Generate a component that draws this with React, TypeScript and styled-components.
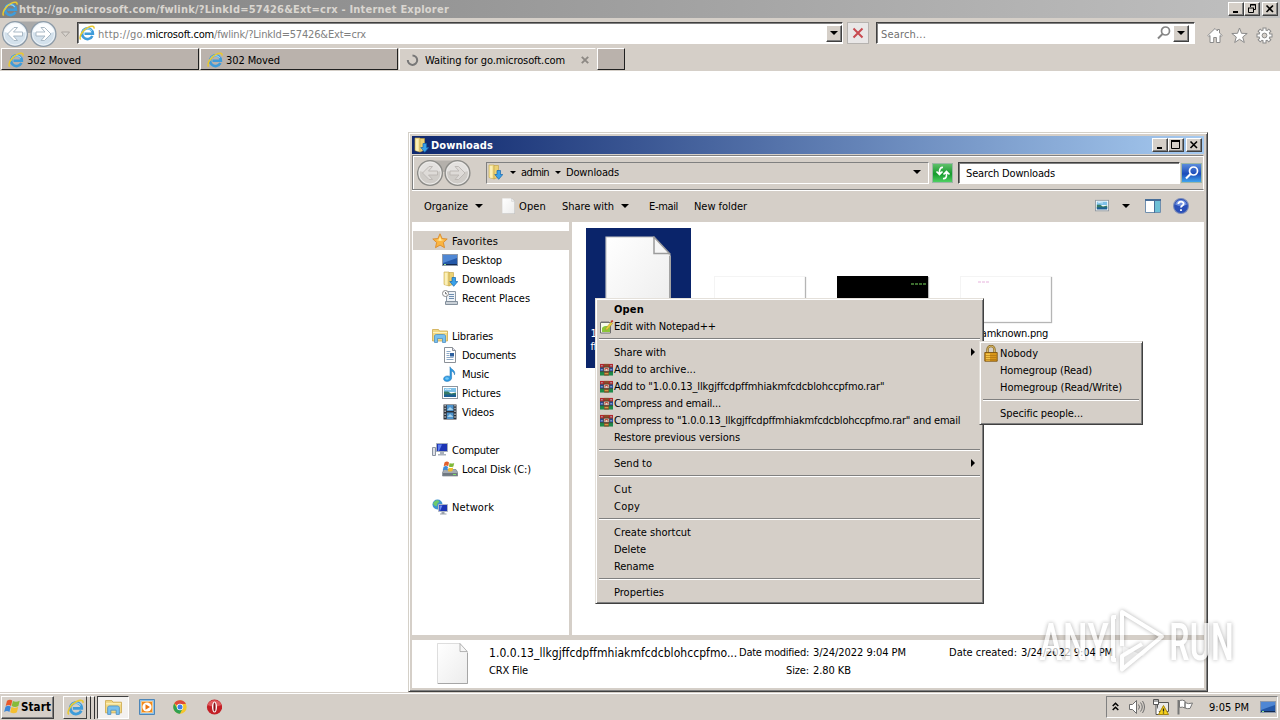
import { useLayoutEffect, useRef, useState } from 'react'
import type { ReactNode } from 'react'
import styled, { createGlobalStyle, css } from 'styled-components'

const face = '#d5cfc8'

const GlobalStyle = createGlobalStyle`
  * {
    box-sizing: border-box;
  }
  body {
    margin: 0;
    overflow: hidden;
    background: #fff;
    color: #000;
    font-family: 'DejaVu Sans Condensed', 'DejaVu Sans', sans-serif;
    font-stretch: condensed;
    font-size: 11px;
    line-height: 17px;
  }
  svg {
    display: block;
    flex: none;
  }
`

const raised = css`
  border: 1px solid;
  border-color: #fff #404040 #404040 #fff;
  box-shadow: inset -1px -1px 0 #808080;
`

/* ---------- text ---------- */

const TextSpan = styled.span<{ $ml?: number; $mt?: number; $color?: string; $bold?: boolean; $size?: number }>`
  flex: none;
  white-space: pre;
  margin-left: ${(p) => p.$ml || 0}px;
  margin-top: ${(p) => p.$mt || 0}px;
  color: ${(p) => p.$color || 'inherit'};
  font-weight: ${(p) => (p.$bold ? 'bold' : 'normal')};
  font-size: ${(p) => p.$size || 11}px;
`

type TextProps = {
  w: number
  ml?: number
  mt?: number
  color?: string
  bold?: boolean
  size?: number
  children: ReactNode
}

// tracks the label so that it takes exactly w pixels
const Text = ({ w, ml, mt, color, bold, size, children }: TextProps) => {
  const ref = useRef<HTMLSpanElement>(null)
  const [spacing, setSpacing] = useState(0)

  useLayoutEffect(() => {
    const el = ref.current
    if (!el || !el.textContent) return
    el.style.letterSpacing = '0px'
    const natural = el.getBoundingClientRect().width
    setSpacing((w - natural) / el.textContent.length)
  }, [w])

  return (
    <TextSpan
      ref={ref}
      $ml={ml}
      $mt={mt}
      $color={color}
      $bold={bold}
      $size={size}
      style={{ letterSpacing: `${spacing}px` }}
    >
      {children}
    </TextSpan>
  )
}

/* ---------- icons ---------- */

const IeIcon = ({ size = 16 }: { size?: number }) => (
  <svg width={size} height={size} viewBox="0 0 16 16" fill="none">
    <path d="M13.400 11A5.400 5.400 0 1 1 13.900 8.800H5.500" stroke="#3f9cda" strokeWidth="2.600" />
    <path d="M3.300 8.500A5.200 5.200 0 0 1 12.800 6" stroke="#9bd8f7" strokeWidth="1.100" />
    <path d="M1.600 14.600C-.4 12 3.400 5 9 2.400C12.500.8 15.600.8 15 3.600" stroke="#e9c930" strokeWidth="1.500" />
  </svg>
)

const ArrowDown = styled.i<{ $ml?: number; $size?: number }>`
  flex: none;
  width: 0;
  height: 0;
  margin-left: ${(p) => p.$ml || 0}px;
  border: ${(p) => p.$size || 4}px solid transparent;
  border-top-color: #000;
  border-bottom: 0;
`

const DownloadsIcon = () => (
  <svg width="16" height="16" viewBox="0 0 16 16">
    <path d="M2 1h5v14l-5-1.500z" fill="#f6e59a" stroke="#c9a94a" strokeWidth=".6" />
    <path d="M7 1.500h4.500V13L7 15z" fill="#ecd274" stroke="#bf9e41" strokeWidth=".6" />
    <path d="M4 2v12" stroke="#fff9d8" />
    <path d="M10 6.500h3.500v4h2.300L11.700 15.300 7.800 10.500H10z" fill="#3aa2ea" stroke="#1565ac" strokeWidth=".7" />
  </svg>
)

const StarIcon = () => (
  <svg width="16" height="16" viewBox="0 0 16 16">
    <path
      d="M8 .8l2.100 4.700 5.100.5-3.800 3.500 1.100 5.200L8 12.100l-4.500 2.600 1.100-5.200L.8 6l5.100-.5z"
      fill="#fbb540"
      stroke="#d98a2b"
      strokeWidth=".9"
    />
    <path d="M8 3l1.200 3.400L12 7l-4 1-3.500-1 2.300-.6z" fill="#fee79a" />
  </svg>
)

const DesktopIcon = () => (
  <svg width="16" height="16" viewBox="0 0 16 16">
    <rect x=".5" y="2.500" width="15" height="11" fill="#2458a8" stroke="#8d99ab" />
    <path d="M1 3h14v3L1 11z" fill="#4f87d4" />
    <path d="M1 12.500h14" stroke="#13294f" />
    <path d="M2 12.500h2" stroke="#8fe08a" />
  </svg>
)

const RecentIcon = () => (
  <svg width="16" height="16" viewBox="0 0 16 16">
    <path d="M4.500 1.500h9v11h-9z" fill="#eef2f6" stroke="#8e9aa6" />
    <path d="M7 4.500h5M7 6.500h5M7 8.500h5" stroke="#6c8db1" />
    <path d="M3.500 11.500h12v3h-12z" fill="#c9d0d7" stroke="#84909c" />
    <circle cx="3.500" cy="3.500" r="3" fill="#fff" stroke="#8a8a8a" />
    <path d="M3.500 2v1.800H5" stroke="#555" fill="none" strokeWidth=".8" />
  </svg>
)

const FolderIcon = ({ size = 16 }: { size?: number }) => (
  <svg width={size} height={size} viewBox="0 0 16 16">
    <path d="M.5 1.500h6l1 1.500h8v10H.5z" fill="#f2d984" stroke="#cda94e" strokeWidth=".8" />
    <path d="M1 4.500h14" stroke="#fff4c0" />
    <path d="M2.500 8c0-1 1-1.500 2-1.500h7c1 0 2 .5 2 1.500V14.500h-3v-4H5.500v4h-3z" fill="#78c0ee" stroke="#4487bd" strokeWidth=".7" />
  </svg>
)

const DocumentIcon = () => (
  <svg width="16" height="16" viewBox="0 0 16 16">
    <path d="M2.500.5h8l3 3v12h-11z" fill="#fff" stroke="#8b9097" />
    <path d="M10.500.5v3h3" fill="#dde" stroke="#8b9097" />
    <path d="M4.500 4.500h4M4.500 6.500h3M4.500 8.500h3M4.500 10.500h7M4.500 12.500h7" stroke="#8daac9" />
    <path d="M8 6h4v3.500H8z" fill="#2d5f9e" />
  </svg>
)

const MusicIcon = () => (
  <svg width="16" height="16" viewBox="0 0 16 16">
    <path d="M8 .8c.5 2.700 6 3 4.500 8-.3-2.200-1.600-3.400-2.900-3.800v7c0 4-8 4.700-8 1 0-3 4-3.700 6.400-2.500z" fill="#2d9be3" stroke="#1b6cae" strokeWidth=".5" />
    <ellipse cx="5" cy="12.500" rx="1.800" ry="1.200" fill="#74c8f6" />
  </svg>
)

const PictureIcon = ({ w = 16 }: { w?: number }) => (
  <svg width={w} height={w} viewBox="0 0 16 16">
    <rect x=".5" y="1.500" width="15" height="12" fill="#fff" stroke="#8d969f" />
    <path d="M2 3h12v4H2z" fill="#7cc0e8" />
    <path d="M2 6.500h4l3 2 5-1v3H2z" fill="#357a66" />
    <path d="M2 9.500h12V12H2z" fill="#1c5f93" />
    <path d="M3 4.500c2-1 4 0 6 0" stroke="#e3f4fb" fill="none" />
  </svg>
)

const VideoIcon = () => (
  <svg width="16" height="16" viewBox="0 0 16 16">
    <path d="M1.500.5h13v15h-13z" fill="#2b2f36" />
    <path d="M4.700 1h6.800v6H4.700zM4.700 8.500h6.800v6.500H4.700z" fill="#4f93cb" />
    <path d="M5 6l3-3 3.500 3zM5 13l3-3 3.500 3z" fill="#a7d2ea" />
    <path d="M3.100 1v14M13 1v14" stroke="#d7dde2" strokeWidth="1.200" strokeDasharray="1.500 1.300" />
  </svg>
)

const ComputerIcon = () => (
  <svg width="16" height="16" viewBox="0 0 16 16">
    <path d="M.5 5.500h3v8h-3z" fill="#dde0e6" stroke="#8b93a1" />
    <path d="M4.500 1.500h11v8h-11z" fill="#1c34b4" stroke="#a5adba" />
    <path d="M6 2.500h4L7 9H6z" fill="#5d7df0" />
    <path d="M8 10h4v2h2v1.500H6V12h2z" fill="#aab1bb" />
  </svg>
)

const DiskIcon = () => (
  <svg width="16" height="16" viewBox="0 0 16 16">
    <path d="M2 8.500h12l1.800 3v3.500H.5v-3.500z" fill="#a4abb2" stroke="#6c737b" strokeWidth=".6" />
    <path d="M1 12h14.500v2.800H1z" fill="#6f7881" />
    <path d="M11 13.500h3" stroke="#7ee06a" />
    <path d="M2.500 1.500q2.500-2 4.500 0l-.8 3.700q-2-1.500-4.500 0z" fill="#e2602c" />
    <path d="M7.700 2q2 1.200 4.500 0l-.8 3.500q-2.500 1.200-4.500 0z" fill="#7fb93a" />
    <path d="M1.500 6q2.500-1.800 4.500 0L5.200 9.500q-2-1.500-4.500 0z" fill="#3e8ad8" />
    <path d="M6.700 6.500q2 1.200 4.500 0l-.8 3.500q-2.500 1.200-4.500 0z" fill="#f2bd2c" />
  </svg>
)

const NetworkIcon = () => (
  <svg width="16" height="16" viewBox="0 0 16 16">
    <circle cx="5.500" cy="5.500" r="5" fill="#3f94cf" />
    <path d="M2 3c2-2 4-2 5-1s-2 2-2 4-2 1-3 0-1-2 0-3z" fill="#6ecb6b" />
    <path d="M6.500 5.500h9v7h-9z" fill="#1c34b4" stroke="#b2b9c4" />
    <path d="M7.500 6.500h3L8 12h-.5z" fill="#6b8af2" />
    <path d="M9.500 13h3v1.500h2v1H8v-1h1.500z" fill="#9aa1ac" />
  </svg>
)

const FileIcon = ({ w, h }: { w: number; h: number }) => (
  <svg width={w} height={h} viewBox="0 0 66 84" preserveAspectRatio="none">
    <defs>
      <linearGradient id="paper" x1="0" y1="0" x2="1" y2="1">
        <stop offset="0" stopColor="#fff" />
        <stop offset="1" stopColor="#ececec" />
      </linearGradient>
    </defs>
    <path d="M1 1h47l17 18v64H1z" fill="url(#paper)" stroke="#c6c6c6" strokeWidth="1.200" />
    <path d="M65 20v63H2" fill="none" stroke="#a3a3a3" strokeWidth="2" />
    <path d="M49 1v16.500H64.500z" fill="#f6f6f6" stroke="#9c9c9c" strokeWidth="1.500" />
  </svg>
)

const RarIcon = () => (
  <svg width="13" height="13" viewBox="0 0 14 14">
    <path d="M0 1h14v4H0z" fill="#b3262c" />
    <path d="M0 5h14v4H0z" fill="#2c50a8" />
    <path d="M0 9h14v4.500H0z" fill="#1e8a4a" />
    <path d="M0 5.200h14M0 9.300h14" stroke="#222" strokeWidth=".7" />
    <path d="M1 3h2M11 3h2M1 7.300h2M11 7.300h2" stroke="#a9c0c9" />
    <path d="M4.500 1h5v12.500h-5z" fill="#8a4b2a" />
    <path d="M4 4.500h6v4.500H4z" fill="#e8e2d6" stroke="#3b2a1e" strokeWidth=".7" />
    <path d="M5.500 8V6h3v2" fill="none" stroke="#c23d2a" />
    <path d="M5 11.500h4" stroke="#e9b94a" />
  </svg>
)

const NotepadIcon = () => (
  <svg width="14" height="14" viewBox="0 0 14 14">
    <path d="M.5 2.500h10v10.500H.5z" fill="#f7fbe9" stroke="#6c6c6c" />
    <path d="M2 8c2-3 7-2 8-.5V12H2z" fill="#8cc63a" />
    <path d="M2 1v2M4 1v2M6 1v2M8 1v2" stroke="#777" />
    <path d="M6 8l5-6 1.600 1.400-5 6-2.100.8z" fill="#e8d03c" stroke="#a08a30" strokeWidth=".5" />
    <path d="M11 1.900L12.900.8" stroke="#c3392b" strokeWidth="1.800" />
  </svg>
)

const LockIcon = () => (
  <svg width="14" height="17" viewBox="0 0 14 17">
    <path d="M3.500 8V4.500a3.500 3.500 0 0 1 7 0V8" fill="none" stroke="#8c6a22" strokeWidth="2.400" />
    <path d="M3.500 8V4.500a3.500 3.500 0 0 1 7 0V8" fill="none" stroke="#dcc070" strokeWidth=".9" />
    <path d="M.8 7.500h12.400v8.700H.8z" fill="#d8961a" stroke="#7d5310" strokeWidth=".9" />
    <path d="M2 8.500h4v7H2z" fill="#f4c549" />
    <path d="M1.500 10.500h11M1.500 12.500h11M1.500 14.500h11" stroke="#a86d10" strokeWidth=".6" />
  </svg>
)

const WindowsFlag = () => (
  <svg width="17" height="16" viewBox="0 0 17 16">
    <path d="M3 1.800q3-2.200 5.300-.2L7 6.900q-2.300-1.700-5.300 0z" fill="#e8582a" />
    <path d="M8.900 2q3 1.600 6.800-.2l-1.300 5.300q-3.300 1.700-6.700 0z" fill="#86bb3b" />
    <path d="M1.500 7.700q3-1.800 5.300 0L5.400 13q-2.300-1.800-5.300 0z" fill="#3b86d8" />
    <path d="M7.500 8.100q3 1.600 6.700 0l-1.300 5.200q-3.200 1.700-6.700 0z" fill="#f5bf30" />
  </svg>
)

type NavArrowsProps = { grey?: boolean }

const NavArrows = ({ grey }: NavArrowsProps) => {
  const second = grey ? 40.5 : 41.5
  const ring = grey ? '#8b8b88' : '#8d9aa6'
  const fill = grey ? '#cfccc8' : '#d3e1ec'
  const arrow = grey ? '#dedbd8' : '#fff'
  const line = grey ? '#bab6b2' : '#a2b2c0'
  return (
    <svg width="56" height="28" viewBox="0 0 56 28">
      <path d="M13 1.500h28v9q-14 5-28 0z" fill={grey ? '#b4b0ab' : '#a9a9a9'} />
      {[13, second].map((cx, i) => (
        <g key={cx} transform={`translate(${cx} 14)`}>
          <circle r="12.400" fill={fill} stroke={ring} strokeWidth="1.300" />
          <path d="M-10.500-2a10.700 10.700 0 0 1 21 0q-10 4-21 0z" fill={grey ? '#e3e1df' : '#fbfdff'} />
          <circle r="11" fill="none" stroke="#fff" strokeOpacity=".6" />
          <path
            transform={i ? 'scale(-1 1)' : undefined}
            d="M-7.500 0L-1-6.500H2.500L-1.500-2H7.500V2h-9l4 4.500H-1z"
            fill={arrow}
            stroke={line}
            strokeWidth=".9"
          />
        </g>
      ))}
    </svg>
  )
}

const gearAngles = [0, 45, 90, 135]

const GearIcon = () => (
  <svg width="17" height="17" viewBox="-8.500 -8.500 17 17">
    {gearAngles.map((a) => (
      <path key={a} transform={`rotate(${a})`} d="M-8 0H8" stroke="#8a8a8a" strokeWidth="4" />
    ))}
    <circle r="6" fill="#8a8a8a" />
    {gearAngles.map((a) => (
      <path key={a} transform={`rotate(${a})`} d="M-7 0H7" stroke="#fff" strokeWidth="2" />
    ))}
    <circle r="5" fill="#fff" />
    <circle r="2.400" fill={face} stroke="#8a8a8a" />
  </svg>
)

/* ---------- small controls ---------- */

const CaptionButton = styled.button`
  ${raised}
  display: flex;
  align-items: center;
  justify-content: center;
  width: 16px;
  height: 14px;
  padding: 0;
  background: ${face};
  color: #000;

  &:last-child {
    margin-left: 2px;
  }
`

type CaptionProps = { restored?: boolean }

const CaptionButtons = ({ restored }: CaptionProps) => (
  <>
    <CaptionButton>
      <svg width="10" height="10">
        <path d="M2 8h5" stroke="#000" strokeWidth="2" />
      </svg>
    </CaptionButton>
    <CaptionButton>
      <svg width="10" height="10" fill="none" stroke="#000">
        {restored ? (
          <path d="M3.500 3V.5h5v5H7M3 1h6M1.500 4v4.500h5V4M1 4h6" />
        ) : (
          <path d="M.5 1v7.500h8V1M0 1.500h9M0 .5h9" />
        )}
      </svg>
    </CaptionButton>
    <CaptionButton>
      <svg width="10" height="10">
        <path d="M1.500 1.500l6.500 6.500M8 1.500L1.500 8" stroke="#000" strokeWidth="1.600" />
      </svg>
    </CaptionButton>
  </>
)

const DropButton = styled.button`
  ${raised}
  display: flex;
  align-items: center;
  justify-content: center;
  width: 16px;
  height: 17px;
  padding: 0;
  background: ${face};
`

/* ---------- browser ---------- */

const Screen = styled.div`
  position: relative;
  display: flex;
  flex-direction: column;
  width: 1280px;
  height: 720px;
  background: #fff;
`

const BrowserTitle = styled.header`
  display: flex;
  align-items: center;
  height: 18px;
  padding: 0 2px;
  background: linear-gradient(90deg, #808080, #c0c0c0);
`

const Spacer = styled.div`
  flex: 1;
`

const BrowserBar = styled.div`
  display: flex;
  height: 30px;
  padding: 2px 7px 0 2px;
  background: ${face};
`

const Field = styled.div<{ $w: number; $ml: number; $mt?: number }>`
  display: flex;
  align-items: center;
  width: ${(p) => p.$w}px;
  height: 22px;
  margin: ${(p) => p.$mt ?? 2}px 0 0 ${(p) => p.$ml}px;
  border: 1px solid;
  border-color: #404040 #fff #fff #404040;
  box-shadow: inset 1px 1px 0 #808080;
  background: #fff;
`

const StopButton = styled.button`
  display: flex;
  align-items: center;
  justify-content: center;
  width: 22px;
  height: 22px;
  margin: 2px 0 0 4px;
  padding: 0;
  border: 1px solid #b6b3b0;
  background: #e9e7e7;
`

const BrowserTools = styled.div`
  display: flex;
  gap: 8px;
  margin: 7px 0 0 12px;
`

const TabRow = styled.div`
  display: flex;
  height: 23px;
  padding-left: 1px;
  background: ${face};
`

const Tab = styled.div<{ $active?: boolean; $w: number }>`
  display: flex;
  align-items: center;
  width: ${(p) => p.$w}px;
  height: 22px;
  margin-right: 1px;
  padding: 1px 6px 0;
  border: 1px solid;
  border-color: ${(p) => (p.$active ? `#fff ${face} ${face} #fff` : '#fff #202020 #202020 #fff')};
  background: ${(p) => (p.$active ? face : '#bab2ac')};
`

const Browser = () => (
  <>
    <BrowserTitle>
      <IeIcon />
      <Text w={430} ml={1} bold color="#dad6d0">
        http://go.microsoft.com/fwlink/?LinkId=57426&amp;Ext=crx - Internet Explorer
      </Text>
      <Spacer />
      <CaptionButtons restored />
    </BrowserTitle>
    <BrowserBar>
      <NavArrows />
      <svg width="18" height="28">
        <path d="M3.500 12h8l-4 4.500z" fill="#d9d5d0" stroke="#a8a39e" />
      </svg>
      <Field $w={766} $ml={1}>
        <svg width="1" height="16" />
        <IeIcon />
        <Text w={48} ml={3} mt={2} color="#808080">http://go.</Text>
        <Text w={68} mt={2}>microsoft.com</Text>
        <Text w={152} mt={2} color="#808080">/fwlink/?LinkId=57426&amp;Ext=crx</Text>
        <Spacer />
        <DropButton><ArrowDown /></DropButton>
      </Field>
      <StopButton>
        <svg width="12" height="12">
          <path d="M1.500 1.500l9 9M10.500 1.500l-9 9" stroke="#c84a50" strokeWidth="2" />
        </svg>
      </StopButton>
      <Field $w={319} $ml={7}>
        <Text w={45} ml={4} mt={2} color="#707070">Search...</Text>
        <Spacer />
        <svg width="14" height="14" fill="none" stroke="#858585">
          <circle cx="8.500" cy="5" r="4" strokeWidth="1.700" />
          <path d="M5.500 8L1 12.500" strokeWidth="2" />
        </svg>
        <svg width="2" height="2" />
        <DropButton><ArrowDown /></DropButton>
        <svg width="5" height="2" />
      </Field>
      <BrowserTools>
        <svg width="16" height="17" fill="#fff" stroke="#8a8a8a">
          <path d="M8 1.500L.8 8.500l1 1L3 8.500V15.500h3.700V10.500h2.700v5H13V8.500l1.200 1 1-1L12.500 6V2.500h-2V4z" />
        </svg>
        <svg width="17" height="17" fill="#fff" stroke="#8a8a8a">
          <path d="M8.500 1l2 5.300 5.700.2-4.500 3.500 1.600 5.500-4.800-3.200-4.800 3.200L5.300 10 .8 6.500l5.700-.2z" />
        </svg>
        <GearIcon />
      </BrowserTools>
    </BrowserBar>
    <TabRow>
      <Tab $w={198}>
        <IeIcon />
        <Text w={54} ml={3} mt={2}>302 Moved</Text>
      </Tab>
      <Tab $w={198}>
        <IeIcon />
        <Text w={54} ml={3} mt={2}>302 Moved</Text>
      </Tab>
      <Tab $w={197} $active>
        <svg width="13" height="14" fill="none">
          <path d="M6.500 2.500a4.700 4.700 0 1 1-4.700 4.500" stroke="#777" strokeWidth="2" />
        </svg>
        <Text w={140} ml={6} mt={2}>Waiting for go.microsoft.com</Text>
        <Spacer />
        <svg width="8" height="8">
          <path d="M.8.8l6.400 6.400M7.200.8L.8 7.200" stroke="#8d8984" strokeWidth="1.900" />
        </svg>
      </Tab>
      <Tab $w={28} />
    </TabRow>
  </>
)

/* ---------- explorer window ---------- */

const Window = styled.section`
  position: absolute;
  left: 408px;
  top: 132px;
  display: flex;
  flex-direction: column;
  width: 800px;
  height: 560px;
  padding: 3px;
  border: 1px solid;
  border-color: #d4d0c8 #404040 #404040 #d4d0c8;
  box-shadow: inset 1px 1px 0 #fff, inset -1px -1px 0 #808080;
  background: ${face};
`

const WindowTitle = styled.div`
  display: flex;
  align-items: center;
  height: 18px;
  padding: 0 2px 0 1px;
  background: linear-gradient(90deg, #0f286e, #a6caf0);
`

const AddressBar = styled.div`
  display: flex;
  align-items: center;
  height: 35px;
  margin-top: 1px;
  padding-left: 4px;
  border: 1px solid #808080;
  border-right-color: #fff;
  box-shadow: inset 1px 1px 0 #fff, 0 1px 0 #fff;
`

const Breadcrumb = styled.div`
  display: flex;
  align-items: center;
  width: 443px;
  height: 22px;
  margin-left: 13px;
  padding: 0 7px 1px 0;
  border: 1px solid;
  border-color: #808080 #fff #fff #808080;
`

const GlossButton = styled.button<{ $tone: string; $ml: number }>`
  display: flex;
  align-items: center;
  justify-content: center;
  width: 21px;
  height: 20px;
  margin-left: ${(p) => p.$ml}px;
  padding: 0;
  border: 1px solid #9cb6a6;
  background: ${(p) => p.$tone};
`

const CommandBar = styled.div`
  display: flex;
  align-items: center;
  height: 32px;
  padding: 0 15px 0 12px;
`

const Panes = styled.div`
  display: flex;
  height: 413px;
  background: #fff;
`

const Sidebar = styled.nav`
  width: 160px;
  padding: 9px 0 0 1px;
  border-right: 3px solid ${face};
`

const TreeRow = styled.div<{ $level: number; $selected?: boolean; $gap?: boolean }>`
  display: flex;
  align-items: center;
  height: 19px;
  margin-top: ${(p) => (p.$gap ? 19 : 0)}px;
  padding-left: ${(p) => (p.$level ? 29 : 19)}px;
  background: ${(p) => (p.$selected ? face : 'transparent')};
`

type TreeItem = { label: string; w: number; icon: ReactNode; level: number; gap?: boolean; selected?: boolean }

const tree: TreeItem[] = [
  { label: 'Favorites', w: 46, icon: <StarIcon />, level: 0, selected: true },
  { label: 'Desktop', w: 40, icon: <DesktopIcon />, level: 1 },
  { label: 'Downloads', w: 53, icon: <DownloadsIcon />, level: 1 },
  { label: 'Recent Places', w: 68, icon: <RecentIcon />, level: 1 },
  { label: 'Libraries', w: 41, icon: <FolderIcon />, level: 0, gap: true },
  { label: 'Documents', w: 54, icon: <DocumentIcon />, level: 1 },
  { label: 'Music', w: 27, icon: <MusicIcon />, level: 1 },
  { label: 'Pictures', w: 39, icon: <PictureIcon />, level: 1 },
  { label: 'Videos', w: 32, icon: <VideoIcon />, level: 1 },
  { label: 'Computer', w: 47, icon: <ComputerIcon />, level: 0, gap: true },
  { label: 'Local Disk (C:)', w: 69, icon: <DiskIcon />, level: 1 },
  { label: 'Network', w: 42, icon: <NetworkIcon />, level: 0, gap: true },
]

const Files = styled.div`
  display: flex;
  flex: 1;
  align-items: flex-start;
  padding: 6px 0 0 14px;
  gap: 18px;
`

const FileTile = styled.div<{ $selected?: boolean }>`
  display: flex;
  flex-direction: column;
  align-items: center;
  width: 105px;
  height: 140px;
  padding: ${(p) => (p.$selected ? '8px 2px 0 0' : '48px 4px 0 0')};
  background: ${(p) => (p.$selected ? '#0a246a' : 'transparent')};
  color: ${(p) => (p.$selected ? '#fff' : '#000')};
`

const FileName = styled.div`
  display: flex;
  flex-direction: column;
  width: 94px;
  margin-top: 7px;
  line-height: 13px;
`

const Thumb = styled.div<{ $dark?: boolean }>`
  display: flex;
  justify-content: ${(p) => (p.$dark ? 'flex-end' : 'flex-start')};
  width: 91px;
  height: 46px;
  margin-bottom: 1px;
  padding: ${(p) => (p.$dark ? '6px 0' : '4px 17px')};
  border: 1px solid ${(p) => (p.$dark ? '#000' : '#f4f4f4')};
  box-shadow: 1px 1px 1px #b5b5b5;
  background: ${(p) => (p.$dark ? '#000' : '#fff')};
`

const Speck = styled.i<{ $color: string; $w: number }>`
  width: ${(p) => p.$w}px;
  height: 2px;
  background: repeating-linear-gradient(90deg, ${(p) => p.$color} 0 3px, transparent 3px 4px);
  opacity: 0.8;
`

const Details = styled.footer`
  display: flex;
  flex: 1;
  margin-top: 5px;
  padding: 3px 0 0 25px;
  background: #fff;
`

const DetailColumn = styled.div<{ $ml: number; $w?: number; $end?: boolean }>`
  display: flex;
  flex-direction: column;
  align-items: ${(p) => (p.$end ? 'flex-end' : 'flex-start')};
  width: ${(p) => (p.$w ? `${p.$w}px` : 'auto')};
  margin-left: ${(p) => p.$ml}px;
  padding-top: 1px;
  line-height: 18px;
`

const Explorer = () => (
  <Window>
    <WindowTitle>
      <DownloadsIcon />
      <Text w={62} ml={2} bold color="#fff">Downloads</Text>
      <Spacer />
      <CaptionButtons />
    </WindowTitle>
    <AddressBar>
      <NavArrows grey />
      <Breadcrumb>
        <DownloadsIcon />
        <ArrowDown $ml={7} $size={3} />
        <Text w={28} ml={5}>admin</Text>
        <ArrowDown $ml={6} $size={3} />
        <Text w={53} ml={5}>Downloads</Text>
        <Spacer />
        <ArrowDown />
      </Breadcrumb>
      <GlossButton $ml={3} $tone="linear-gradient(#5fc06a, #159a2c 55%, #4fd062)">
        <svg width="16" height="14" fill="none" stroke="#fff" strokeWidth="1.700">
          <path d="M8 1.500Q5 1 4.500 5v3M1.500 5.500l3 3 3-3M8 12.500Q11.500 13 11.500 9V6M8.500 8.500l3-3 3 3" />
        </svg>
      </GlossButton>
      <Field $w={222} $ml={5} $mt={0}>
        <Text w={89} ml={7} mt={1}>Search Downloads</Text>
      </Field>
      <GlossButton $ml={1} $tone="linear-gradient(#5a8cdc, #1b4cba 55%, #3fa4ee)">
        <svg width="16" height="16" fill="none" stroke="#fff">
          <circle cx="9.500" cy="6" r="4" strokeWidth="1.700" />
          <path d="M6.500 9L2 13.500" strokeWidth="2.200" />
        </svg>
      </GlossButton>
    </AddressBar>
    <CommandBar>
      <Text w={44}>Organize</Text>
      <ArrowDown $ml={7} />
      <svg width="19" height="1" />
      <FileIcon w={13} h={16} />
      <Text w={27} ml={4}>Open</Text>
      <Text w={52} ml={16}>Share with</Text>
      <ArrowDown $ml={7} />
      <Text w={29} ml={20}>E-mail</Text>
      <Text w={53} ml={16}>New folder</Text>
      <Spacer />
      <PictureIcon w={14} />
      <ArrowDown $ml={13} />
      <svg width="15" height="1" />
      <svg width="16" height="14">
        <path d="M.5.5h15v13H.5z" fill="#fff" stroke="#6f8fae" />
        <path d="M10 1h5v12h-5z" fill="#6ec0d6" />
        <path d="M0 1h16" stroke="#486e98" strokeWidth="2" />
        <path d="M9.500 2v12" stroke="#486e98" />
      </svg>
      <svg width="12" height="1" />
      <svg width="16" height="16" fill="none" viewBox="0 0 15 15">
        <circle cx="7.500" cy="7.500" r="7" fill="#2a4fb8" stroke="#7c8db8" />
        <path d="M2 6a5.700 5.700 0 0 1 11 0q-5 3-11 0z" fill="#6f8fdf" />
        <path d="M5 5.700c0-3 5-3 5-.3 0 1.700-2.500 1.600-2.500 3.600M7.500 10.500v1.800" stroke="#fff" strokeWidth="1.700" />
      </svg>
    </CommandBar>
    <Panes>
      <Sidebar>
        {tree.map((item) => (
          <TreeRow key={item.label} $level={item.level} $gap={item.gap} $selected={item.selected}>
            {item.icon}
            <Text w={item.w} ml={4} mt={2}>{item.label}</Text>
          </TreeRow>
        ))}
      </Sidebar>
      <Files>
        <FileTile $selected>
          <FileIcon w={66} h={84} />
          <FileName>
            <Text w={88}>1.0.0.13_llkgjffcd</Text>
            <Text w={88}>ffmhiakmfcdcbl</Text>
          </FileName>
        </FileTile>
        <FileTile>
          <Thumb />
        </FileTile>
        <FileTile>
          <Thumb $dark>
            <Speck $color="#4d8a3c" $w={16} />
          </Thumb>
        </FileTile>
        <FileTile>
          <Thumb>
            <Speck $color="#f0cfea" $w={12} />
          </Thumb>
          <Text w={85} mt={2}>streamknown.png</Text>
        </FileTile>
      </Files>
    </Panes>
    <Details>
      <FileIcon w={31} h={41} />
      <DetailColumn $ml={21} $w={250}>
        <Text w={248} size={12}>1.0.0.13_llkgjffcdpffmhiakmfcdcblohccpfmo...</Text>
        <Text w={39}>CRX File</Text>
      </DetailColumn>
      <DetailColumn $ml={0} $w={70} $end>
        <Text w={70}>Date modified:</Text>
        <Text w={23}>Size:</Text>
      </DetailColumn>
      <DetailColumn $ml={4}>
        <Text w={93}>3/24/2022 9:04 PM</Text>
        <Text w={38}>2.80 KB</Text>
      </DetailColumn>
      <DetailColumn $ml={43}>
        <Text w={68}>Date created:</Text>
      </DetailColumn>
      <DetailColumn $ml={4}>
        <Text w={92}>3/24/2022 9:04 PM</Text>
      </DetailColumn>
    </Details>
  </Window>
)

/* ---------- menus ---------- */

const Menu = styled.div<{ $x: number; $y: number; $w: number; $pt?: number }>`
  position: absolute;
  left: ${(p) => p.$x}px;
  top: ${(p) => p.$y}px;
  width: ${(p) => p.$w}px;
  padding: ${(p) => p.$pt || 2}px 2px 2px;
  border: 1px solid;
  border-color: #e4e0da #404040 #404040 #e4e0da;
  box-shadow: inset 1px 1px 0 #fff, inset -1px -1px 0 #808080;
  background: ${face};
`

const MenuRow = styled.div`
  display: flex;
  align-items: center;
  height: 17px;
  padding: 0 6px 0 2px;
`

const IconSlot = styled.div<{ $w: number }>`
  display: flex;
  flex: none;
  align-items: center;
  width: ${(p) => p.$w}px;
`

const Separator = styled.hr`
  height: 2px;
  margin: 3px 1px 4px;
  border: 0;
  border-top: 1px solid #808080;
  border-bottom: 1px solid #fff;
`

const ArrowRight = styled.i`
  margin-bottom: 1px;
  border: 4px solid transparent;
  border-left-color: #000;
  border-right: 0;
`

type MenuItem = null | { label: string; w: number; icon?: ReactNode; bold?: boolean; sub?: boolean }

const fileMenu: MenuItem[] = [
  { label: 'Open', w: 30, bold: true },
  { label: 'Edit with Notepad++', w: 102, icon: <NotepadIcon /> },
  null,
  { label: 'Share with', w: 52, sub: true },
  { label: 'Add to archive...', w: 82, icon: <RarIcon /> },
  { label: 'Add to "1.0.0.13_llkgjffcdpffmhiakmfcdcblohccpfmo.rar"', w: 270, icon: <RarIcon /> },
  { label: 'Compress and email...', w: 107, icon: <RarIcon /> },
  { label: 'Compress to "1.0.0.13_llkgjffcdpffmhiakmfcdcblohccpfmo.rar" and email', w: 346, icon: <RarIcon /> },
  { label: 'Restore previous versions', w: 126 },
  null,
  { label: 'Send to', w: 38, sub: true },
  null,
  { label: 'Cut', w: 18 },
  { label: 'Copy', w: 26 },
  null,
  { label: 'Create shortcut', w: 77 },
  { label: 'Delete', w: 32 },
  { label: 'Rename', w: 40 },
  null,
  { label: 'Properties', w: 50 },
]

const shareMenu: MenuItem[] = [
  { label: 'Nobody', w: 38, icon: <LockIcon /> },
  { label: 'Homegroup (Read)', w: 92 },
  { label: 'Homegroup (Read/Write)', w: 122 },
  null,
  { label: 'Specific people...', w: 83 },
]

const MenuItems = ({ items, slot }: { items: MenuItem[]; slot: number }) => (
  <>
    {items.map((item, i) =>
      item ? (
        <MenuRow key={item.label}>
          <IconSlot $w={slot}>{item.icon}</IconSlot>
          <Text w={item.w} bold={item.bold}>{item.label}</Text>
          <Spacer />
          {item.sub && <ArrowRight />}
        </MenuRow>
      ) : (
        <Separator key={i} />
      )
    )}
  </>
)

/* ---------- taskbar ---------- */

const Taskbar = styled.footer`
  display: flex;
  height: 28px;
  margin-top: auto;
  padding: 3px 2px 0 1px;
  border-top: 1px solid ${face};
  box-shadow: inset 0 1px 0 #fff;
  background: ${face};
`

const StartButton = styled.button`
  ${raised}
  display: flex;
  align-items: center;
  width: 53px;
  height: 23px;
  padding: 0 0 1px 2px;
  background: ${face};
  font-family: inherit;
  font-stretch: condensed;
`

const TaskButton = styled.div<{ $w: number; $ml?: number; $pressed?: boolean }>`
  display: flex;
  align-items: center;
  width: ${(p) => p.$w}px;
  height: 23px;
  margin-left: ${(p) => p.$ml || 0}px;
  padding-left: ${(p) => (p.$pressed ? 7 : 3)}px;
  border: 1px solid;
  border-color: ${(p) => (p.$pressed ? '#404040 #fff #fff #404040' : '#fff #404040 #404040 #fff')};
  background: ${(p) => (p.$pressed ? '#f3f1ef' : face)};
`

const Stack = styled.div`
  width: 4px;
  height: 23px;
  border-right: 1px solid #303030;
  border-top: 1px solid #fff;
`

const Launchers = styled.div`
  display: flex;
  align-items: center;
  height: 22px;
  margin-left: 10px;
  gap: 18px;
`

const Tray = styled.div`
  display: flex;
  align-items: center;
  width: 172px;
  height: 22px;
  padding-left: 5px;
  border: 1px solid;
  border-color: #808080 #fff #fff #808080;
`

const SystemBar = () => (
  <Taskbar>
    <StartButton>
      <WindowsFlag />
      <Text w={30} bold size={11.5}>Start</Text>
    </StartButton>
    <TaskButton $w={24} $ml={9}>
      <IeIcon size={17} />
    </TaskButton>
    <Stack />
    <Stack />
    <TaskButton $w={32} $ml={2} $pressed>
      <FolderIcon size={17} />
    </TaskButton>
    <Launchers>
      <svg width="16" height="16">
        <path d="M.5.5h15v15H.5z" fill="#8dc1ea" stroke="#4d86b8" />
        <path d="M2.500 2.500h11v11h-11z" fill="#f08a1d" stroke="#f7c98c" />
        <circle cx="8" cy="8" r="4.600" fill="#fff" />
        <path d="M6.500 5.300v5.400L11 8z" fill="#ea7410" />
      </svg>
      <svg width="14" height="14" viewBox="0 0 14 14">
        <circle cx="7" cy="7" r="6.700" fill="#f5c62c" />
        <path d="M7 7L1.200 3.600A6.700 6.700 0 0 1 12.900 4H7z" fill="#de4a3b" />
        <path d="M1.200 3.600A6.700 6.700 0 0 0 7 13.700L9.600 8.500 4.500 8.800z" fill="#2fa152" />
        <circle cx="7" cy="7" r="3.200" fill="#fff" />
        <circle cx="7" cy="7" r="2.500" fill="#3d7fe8" />
      </svg>
      <svg width="17" height="16" viewBox="0 0 17 16">
        <circle cx="9.500" cy="8" r="7.600" fill="#c31f26" />
        <path d="M2.500 6a7.600 7.600 0 0 1 14 0q-7 3-14 0z" fill="#df5b5e" />
        <ellipse cx="9.500" cy="8" rx="2.500" ry="5.500" fill="#fff" />
        <ellipse cx="9.500" cy="8" rx="1.100" ry="4.600" fill="#8d1218" />
      </svg>
    </Launchers>
    <Spacer />
    <Tray>
      <svg width="7" height="10" fill="none" stroke="#000" strokeWidth="1.500">
        <path d="M.7 4l2.800-2.800L6.300 4M.7 8l2.800-2.800L6.300 8" />
      </svg>
      <svg width="10" height="1" />
      <svg width="16" height="14" fill="none" stroke="#6d6d6d">
        <path d="M.5 4.500h3l4-4v13l-4-4h-3z" fill="#fff" />
        <path d="M9.500 4.500q2 2.500 0 5M11.500 2.500q3.500 4.500 0 9M13.500 1q4 6 0 12" />
      </svg>
      <svg width="8" height="1" />
      <svg width="16" height="16">
        <path d="M4.500 3.500h11v9h-11z" fill="#e9e9e9" stroke="#555" />
        <path d="M.5.5h5v5h-5zM3 5.500v10h4" fill="#fff" stroke="#555" />
        <path d="M2 1v2M4 1v2" stroke="#555" />
        <path d="M10.500 6.500l5 9h-10z" fill="#f7d21b" stroke="#a68510" />
        <path d="M10.500 9.500v3M10.500 13.500v1" stroke="#222" strokeWidth="1.300" />
      </svg>
      <svg width="8" height="1" />
      <svg width="16" height="16" fill="#fff" stroke="#777">
        <path d="M1.500 1v14.500" strokeWidth="2" />
        <path d="M2.500 1.500q3-1 5.500.5v7q-2.500-1.500-5.500-.5zM8 3.500q3 2 7.500.5L13 9.500q-3 .5-5-.5z" />
      </svg>
      <Text w={40} ml={16}>9:05 PM</Text>
      <svg width="11" height="1" />
      <DesktopIcon />
    </Tray>
  </Taskbar>
)

/* ---------- watermark ---------- */

const WatermarkSvg = styled.svg`
  position: absolute;
  left: 1030px;
  top: 600px;
  overflow: visible;
  opacity: 0.7;
  filter: drop-shadow(0 0 2px rgba(0, 0, 0, 0.45));
  font-family: Roboto, sans-serif;
  font-size: 52px;
  font-weight: 500;
`

const Watermark = () => (
  <WatermarkSvg width="210" height="80" fill="#fff">
    <text x="9" y="59.500" textLength="70" lengthAdjust="spacingAndGlyphs">ANY</text>
    <text x="139" y="59.500" textLength="65" lengthAdjust="spacingAndGlyphs">RUN</text>
    <g fill="none" stroke="#fff" strokeWidth="4" strokeLinejoin="round">
      <path d="M93 46l20 10 18-19-38 32z" fill="#fff" fillOpacity=".5" stroke="none" />
      <path d="M86 17h-3v43h3" />
      <path d="M92 46V12l40 24.500-40 33V56l20-12" />
    </g>
  </WatermarkSvg>
)

const App = () => (
  <>
    <GlobalStyle />
    <Screen>
      <Browser />
      <Explorer />
      <Menu $x={595} $y={298} $w={389}>
        <MenuItems items={fileMenu} slot={14} />
      </Menu>
      <Menu $x={979} $y={341} $w={164} $pt={3}>
        <MenuItems items={shareMenu} slot={16} />
      </Menu>
      <Watermark />
      <SystemBar />
    </Screen>
  </>
)

export default App
